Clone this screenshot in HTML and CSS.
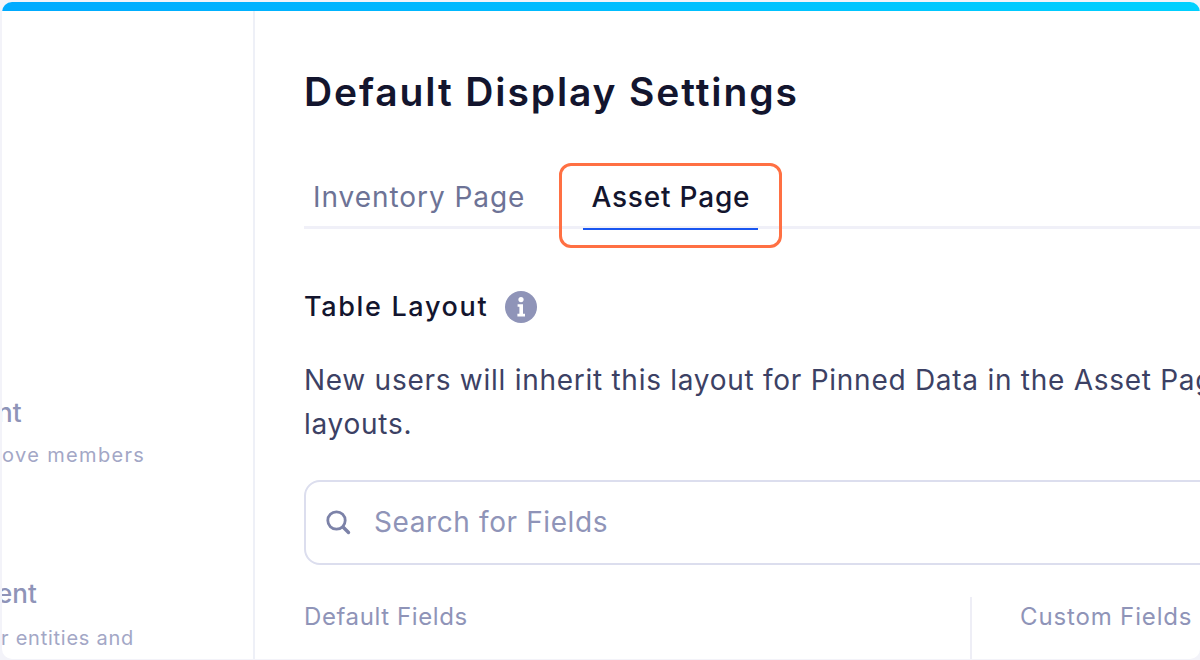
FILE: index.html
```html
<!DOCTYPE html>
<html lang="en">
<head>
<meta charset="utf-8">
<title>Default Display Settings</title>
<link rel="stylesheet" href="styles.css">
</head>
<body>
<div class="frame">
  <div class="accent"></div>
  <div class="content">
    <aside class="sidebar">
      <div class="side-item side-item-first">
        <div class="side-title side-title-a">nt</div>
        <div class="side-desc side-desc-a">ove members</div>
      </div>
      <div class="side-item side-item-second">
        <div class="side-title side-title-b">ent</div>
        <div class="side-desc side-desc-b">r entities and</div>
      </div>
    </aside>
    <main class="main">
      <h1 class="heading">Default Display Settings</h1>
      <nav class="tabs">
        <div class="tab tab-inactive">Inventory Page</div>
        <div class="tab tab-active">Asset Page<span class="highlight"></span></div>
      </nav>
      <div class="section-title">
        <span>Table Layout</span>
        <svg class="info" viewBox="0 0 32 32" aria-hidden="true">
          <circle cx="16" cy="16" r="16" fill="#8f94b8"/>
          <circle cx="16" cy="8.6" r="2.6" fill="#fff"/>
          <path d="M12.6 13.2h5.4v9.6h2v2.6h-7.6v-2.6h2v-7h-1.8z" fill="#fff"/>
        </svg>
      </div>
      <p class="description">New users will inherit this layout for Pinned Data in the Asset Page<br>layouts.</p>
      <div class="search">
        <svg class="search-icon" viewBox="0 0 26 26" aria-hidden="true">
          <circle cx="11.5" cy="11.5" r="8.7" fill="none" stroke="#7c82a8" stroke-width="2.8"/>
          <path d="M18 18l5.5 5.5" fill="none" stroke="#7c82a8" stroke-width="3.4" stroke-linecap="round"/>
        </svg>
        <span class="placeholder">Search for Fields</span>
      </div>
      <div class="columns">
        <div class="col col-default">Default Fields</div>
        <div class="col col-custom">Custom Fields</div>
      </div>
    </main>
  </div>
</div>
</body>
</html>
```

FILE: styles.css
```css
* { box-sizing: border-box; }
html, body { margin: 0; height: 100%; background: #f3f3f9; overflow: hidden; }
body { font-family: Inter, "Liberation Sans", sans-serif; }

.frame {
  width: 1198px;
  height: 657px;
  margin: 2px 0 0 2px;
  background: #fff;
  border-radius: 10px;
  overflow: hidden;
  display: flex;
  flex-direction: column;
}
.accent {
  height: 9px;
  flex: none;
  background: linear-gradient(90deg, #00aaff, #00d0ff);
}
.content { flex: 1; display: flex; min-height: 0; }

.sidebar {
  width: 253px;
  flex: none;
  border-right: 2px solid #eef0f7;
  overflow: hidden;
  padding-top: 386px;
}
.side-item { height: 183px; }
.side-title { font-size: 26px; line-height: 32px; font-weight: 500; color: #8f94b8; white-space: nowrap; }
.side-desc { font-size: 20px; line-height: 28px; margin-top: 12px; color: #a3a7c6; white-space: nowrap; letter-spacing: 1.35px; }
.side-title-a { margin-left: -5px; }
.side-title-b { margin-left: -5px; margin-top: -2px; }
.side-desc-a { margin-left: 0; }
.side-desc-b { margin-top: 14px; margin-left: -1px; letter-spacing: 0.75px; }

.main { flex: 1; min-width: 0; padding: 0 0 0 49px; overflow: hidden; }
.heading {
  margin: 54px 0 0;
  font-size: 39px;
  line-height: 54px;
  font-weight: 600;
  letter-spacing: 1.87px;
  color: #13152e;
  white-space: nowrap;
}
.tabs {
  display: flex;
  gap: 50px;
  height: 56px;
  margin-top: 54px;
  border-bottom: 3px solid #f0f0f8;
}
.tab {
  position: relative;
  height: 57px;
  flex: none;
  font-size: 28px;
  line-height: 40px;
  white-space: nowrap;
}
.tab-inactive { padding: 4px 8px 0 9px; letter-spacing: 0.95px; color: #6d7396; }
.tab-active {
  padding: 4px 8px 0;
  font-weight: 500;
  letter-spacing: 0.8px;
  color: #13152e;
  border-bottom: 2px solid #1a56f0;
}
.highlight {
  position: absolute;
  left: -24px;
  right: -24px;
  top: -10px;
  height: 85px;
  border: 3px solid #ff7043;
  border-radius: 12px;
}
.section-title {
  display: flex;
  align-items: center;
  gap: 17px;
  margin-top: 59px;
  font-size: 27px;
  line-height: 38px;
  font-weight: 500;
  letter-spacing: 1.65px;
  color: #13152e;
}
.info { width: 32px; height: 32px; }
.description {
  margin: 32px 0 0;
  font-size: 28px;
  line-height: 44px;
  letter-spacing: 0.73px;
  color: #3c4164;
  white-space: nowrap;
}
.search {
  display: flex;
  align-items: center;
  gap: 23px;
  height: 85px;
  margin: 34px -20px 0 0;
  padding: 0 0 2px 19px;
  border: 2px solid #dcdeee;
  border-radius: 16px;
}
.search-icon { width: 26px; height: 26px; flex: none; }
.placeholder { font-size: 28px; letter-spacing: 0.6px; color: #8f94b8; }
.columns { display: flex; margin-top: 32px; height: 62px; }
.col { font-size: 24px; line-height: 40px; letter-spacing: 0.6px; color: #8f94b8; white-space: nowrap; }
.col-default { width: 666px; }
.col-custom { padding-left: 48px; border-left: 2px solid #eeeef6; letter-spacing: 0.85px; }
```
